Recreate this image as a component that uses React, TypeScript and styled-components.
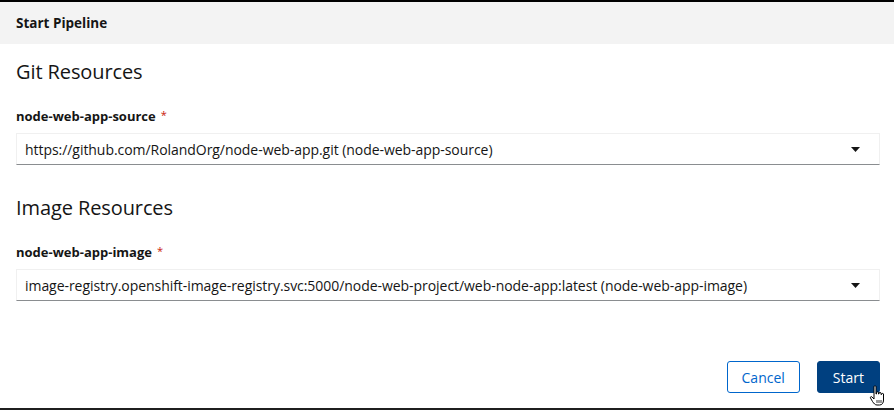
import React, { FC } from 'react';
import styled, { createGlobalStyle } from 'styled-components';

const GlobalStyle = createGlobalStyle`
  html, body {
    margin: 0;
    padding: 0;
    background: #ffffff;
    font-family: 'Open Sans', 'Liberation Sans', sans-serif;
    color: #151515;
  }
`;

const Page = styled.div`
  width: 894px;
  height: 410px;
  box-sizing: border-box;
  border-top: 2px solid #000;
  border-bottom: 2px solid #1f1f1f;
  display: flex;
  flex-direction: column;
  position: relative;
  overflow: hidden;
`;

const Header = styled.div`
  height: 42px;
  background: #f3f3f3;
  display: flex;
  align-items: center;
  padding-left: 16px;
  font-size: 13.5px;
  font-weight: 700;
`;

const Body = styled.div`
  flex: 1;
  display: flex;
  flex-direction: column;
  padding: 0 14px 0 16px;
`;

const SectionTitle = styled.h2<{ top: number }>`
  margin: ${(p) => p.top}px 0 0 0;
  font-size: 20px;
  line-height: 24px;
  font-weight: 400;
  letter-spacing: -0.1px;
`;

const Label = styled.div`
  margin-top: 22px;
  height: 21px;
  font-size: 13px;
  line-height: 21px;
  font-weight: 700;
`;

const Required = styled.span`
  color: #c9190b;
  margin-left: 5px;
  font-size: 11px;
  line-height: 0;
  font-weight: 400;
  position: relative;
  top: -2px;
`;

const Select = styled.div`
  margin-top: 6px;
  height: 32px;
  box-sizing: border-box;
  border: 1px solid #f0f0f0;
  border-bottom-color: #8a8d90;
  display: flex;
  align-items: center;
  padding: 0 19px 0 8px;
  font-size: 14px;
  letter-spacing: -0.05px;
`;

const SelectText = styled.span`
  flex: 1;
  white-space: nowrap;
`;

const Footer = styled.div`
  margin-top: 60px;
  display: flex;
  justify-content: flex-end;
  gap: 17px;
`;

const Button = styled.button<{ primary?: boolean }>`
  height: 32px;
  box-sizing: border-box;
  padding: 0 ${(p) => (p.primary ? 15 : 14)}px;
  border-radius: 3px;
  font-family: inherit;
  font-size: 14px;
  cursor: pointer;
  border: 1px solid ${(p) => (p.primary ? '#004080' : '#0066cc')};
  background: ${(p) => (p.primary ? '#004080' : '#ffffff')};
  color: ${(p) => (p.primary ? '#ffffff' : '#0066cc')};
`;

const Cursor = styled.svg`
  position: absolute;
  left: 869px;
  top: 383px;
  width: 18px;
  height: 22px;
`;

const Caret: FC = () => (
  <svg width="9" height="5" viewBox="0 0 9 5">
    <path d="M0 0 L9 0 L4.5 5 Z" fill="#151515" />
  </svg>
);

const Field: FC<{ label: string; value: string }> = ({ label, value }) => (
  <>
    <Label>
      {label}
      <Required>*</Required>
    </Label>
    <Select>
      <SelectText>{value}</SelectText>
      <Caret />
    </Select>
  </>
);

const App: FC = () => (
  <Page>
    <GlobalStyle />
    <Header>Start Pipeline</Header>
    <Body>
      <SectionTitle top={16}>Git Resources</SectionTitle>
      <Field label="node-web-app-source" value="https://github.com/RolandOrg/node-web-app.git (node-web-app-source)" />
      <SectionTitle top={31}>Image Resources</SectionTitle>
      <Field
        label="node-web-app-image"
        value="image-registry.openshift-image-registry.svc:5000/node-web-project/web-node-app:latest (node-web-app-image)"
      />
      <Footer>
        <Button>Cancel</Button>
        <Button primary>Start</Button>
      </Footer>
    </Body>
    <Cursor viewBox="0 0 18 22">
      <path
        d="M5 1.5 C5 0.7 7 0.7 7 1.5 L7 9 L7.5 9 L7.5 7.5 C7.5 6.7 9.5 6.7 9.5 7.5 L9.5 9 L10 9 L10 8 C10 7.2 12 7.2 12 8 L12 9.5 L12.5 9.5 L12.5 9 C12.5 8.2 14.5 8.2 14.5 9 L14.5 15 C14.5 18 13 20 10.5 20 L8 20 C6 20 5 18.5 3.5 16.5 L1.5 13 C1 12 2.2 11 3 12 L5 14 Z"
        fill="#ffffff"
        stroke="#000000"
        strokeWidth="1"
        strokeLinejoin="round"
      />
      <path d="M8 15 L8 18 M10 15 L10 18 M12 15 L12 18" stroke="#000" strokeWidth="0.8" />
    </Cursor>
  </Page>
);

export default App;
